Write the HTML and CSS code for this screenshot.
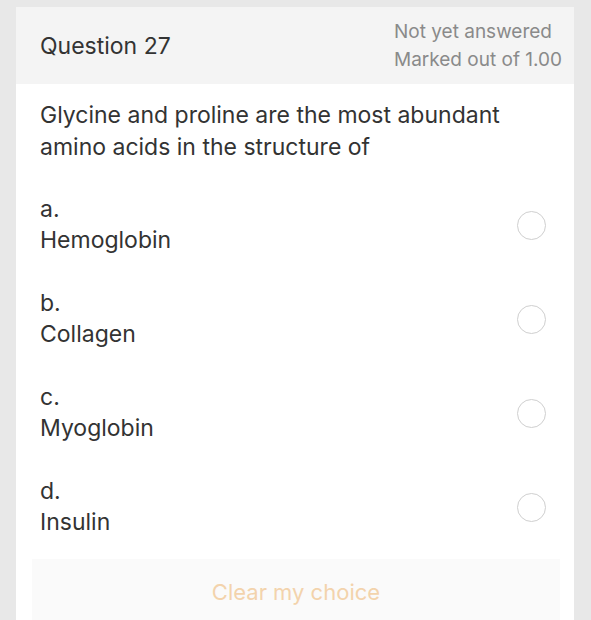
FILE: index.html
```html
<!DOCTYPE html>
<html lang="en">
<head>
    <meta charset="UTF-8">
    <meta name="viewport" content="width=device-width, initial-scale=1.0">
    <title>Question 27</title>
    <link rel="stylesheet" href="styles.css">
</head>
<body>
    <div class="question-card">
        <header class="question-head">
            <h3 class="question-no">Question 27</h3>
            <div class="question-state">
                <span>Not yet answered</span>
                <span>Marked out of 1.00</span>
            </div>
        </header>
        <section class="question-body">
            <p class="question-text">Glycine and proline are the most abundant amino acids in the structure of</p>
            <div class="answers">
                <label class="answer">
                    <span class="answer-label"><span>a.</span><span>Hemoglobin</span></span>
                    <span class="radio"></span>
                </label>
                <label class="answer">
                    <span class="answer-label"><span>b.</span><span>Collagen</span></span>
                    <span class="radio"></span>
                </label>
                <label class="answer">
                    <span class="answer-label"><span>c.</span><span>Myoglobin</span></span>
                    <span class="radio"></span>
                </label>
                <label class="answer">
                    <span class="answer-label"><span>d.</span><span>Insulin</span></span>
                    <span class="radio"></span>
                </label>
            </div>
            <button class="clear-btn">Clear my choice</button>
        </section>
    </div>
</body>
</html>
```

FILE: styles.css
```css
body {
    background-color: #e8e8e8;
    margin: 0;
    padding: 7px 17px 0 16px;
    height: 620px;
    box-sizing: border-box;
    overflow: hidden;
}
* {
    font-family: Inter, Roboto, "Helvetica Neue", Arial, sans-serif;
}
.question-card {
    background-color: white;
    width: 558px;
    height: 640px;
}
.question-head {
    display: flex;
    justify-content: space-between;
    align-items: center;
    height: 77px;
    background-color: #f4f4f4;
    padding: 0 12px 0 24px;
}
.question-no {
    margin: 0;
    font-size: 23px;
    font-weight: normal;
    color: #333;
}
.question-state {
    display: flex;
    flex-direction: column;
    align-items: flex-start;
    font-size: 19px;
    line-height: 28px;
    color: #8a8a8a;
}
.question-body {
    display: flex;
    flex-direction: column;
    padding: 15px 24px 0 24px;
}
.question-text {
    margin: 0;
    font-size: 23px;
    line-height: 32px;
    color: #333;
}
.answers {
    display: flex;
    flex-direction: column;
    gap: 32px;
    margin-top: 31px;
}
.answer {
    display: flex;
    justify-content: space-between;
    align-items: center;
    padding-right: 4px;
}
.answer-label {
    display: flex;
    flex-direction: column;
    font-size: 23px;
    line-height: 31px;
    color: #333;
}
.radio {
    width: 27px;
    height: 27px;
    border: 1.5px solid #cfcfcf;
    border-radius: 50%;
}
.clear-btn {
    margin: 21px -10px 0 -8px;
    height: 66px;
    border: none;
    background-color: #fafafa;
    font-size: 22px;
    color: #f3d3ac;
}
```
